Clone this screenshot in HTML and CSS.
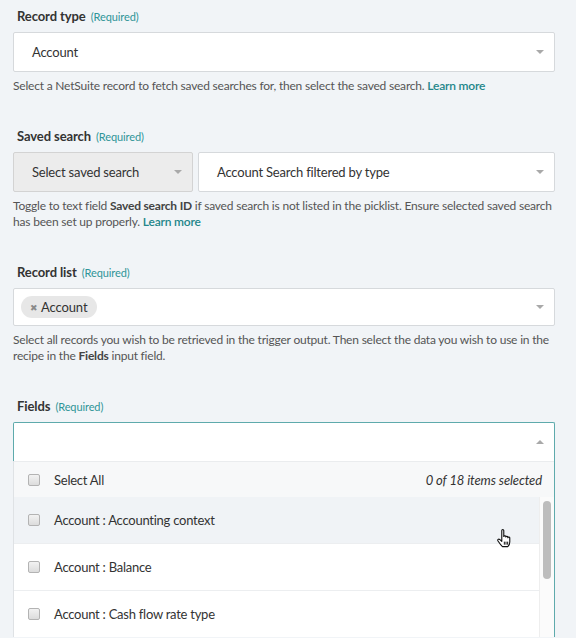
FILE: index.html
```html
<!DOCTYPE html>
<html>
<head>
<meta charset="utf-8">
<link rel="stylesheet" href="styles.css">
</head>
<body>
<div class="page">
  <section class="field">
    <div class="label">Record type <span class="req">(Required)</span></div>
    <div class="select h40"><span class="value">Account</span><span class="caret"></span></div>
    <p class="help">Select a NetSuite record to fetch saved searches for, then select the saved search. <a class="link">Learn more</a></p>
  </section>

  <section class="field">
    <div class="label">Saved search <span class="req">(Required)</span></div>
    <div class="split">
      <div class="select h40 toggle"><span class="value">Select saved search</span><span class="caret"></span></div>
      <div class="select h40 grow"><span class="value">Account Search filtered by type</span><span class="caret"></span></div>
    </div>
    <p class="help">Toggle to text field <b>Saved search ID</b> if saved search is not listed in the picklist. Ensure selected saved search has been set up properly. <a class="link">Learn more</a></p>
  </section>

  <section class="field">
    <div class="label">Record list <span class="req">(Required)</span></div>
    <div class="select h38 multi"><span class="tag"><span class="x">&#x2716;</span>Account</span><span class="caret"></span></div>
    <p class="help">Select all records you wish to be retrieved in the trigger output. Then select the data you wish to use in the recipe in the <b>Fields</b> input field.</p>
  </section>

  <section class="field last">
    <div class="label">Fields <span class="req">(Required)</span></div>
    <div class="select h39 open"><span class="value"></span><span class="caret up"></span></div>
    <div class="dropdown">
      <div class="row head"><span class="cb"></span><span class="txt">Select All</span><span class="count">0 of 18 items selected</span></div>
      <div class="listwrap">
        <div class="list">
          <div class="row item hover"><span class="cb"></span><span class="txt">Account : Accounting context</span></div>
          <div class="row item"><span class="cb"></span><span class="txt">Account : Balance</span></div>
          <div class="row item"><span class="cb"></span><span class="txt">Account : Cash flow rate type</span></div>
        </div>
        <div class="scroll"><div class="thumb"></div></div>
        <svg class="cursor" width="18" height="20" viewBox="0 0 16 18">
          <path d="M6 2.2C6 1 7.8 1 7.8 2.2V7.6C7.8 6.7 9.6 6.7 9.6 7.6V8.1C9.6 7.2 11.4 7.2 11.4 8.1V8.7C11.4 7.9 13.2 7.9 13.2 8.7V12.6C13.2 14.4 12.3 16 11.4 16.8H6.6C5.6 15.8 3.6 13.2 2.6 11.7C1.9 10.5 3.1 9.5 4.1 10.3L6 12Z" fill="#fff" stroke="#111" stroke-width="1" stroke-linejoin="round"/>
          <path d="M8.3 12.3V15M9.8 12.3V15M11.3 12.3V15" stroke="#111" stroke-width="0.9"/>
        </svg>
      </div>
    </div>
  </section>
</div>
</body>
</html>
```
FILE: styles.css
```css
html, body {
  margin: 0;
  padding: 0;
  background: #f1f4f7;
  height: 638px;
  overflow: hidden;
}
body {
  font-family: Lato, "Open Sans", "Liberation Sans", sans-serif;
  color: #333;
}
.page {
  width: 542px;
  margin-left: 13px;
  padding-top: 7px;
}
.field {
  margin-bottom: 33px;
}
.label {
  font-size: 13px;
  font-weight: 700;
  line-height: 18px;
  height: 18px;
  color: #333;
  padding-left: 4px;
  margin-bottom: 7px;
  letter-spacing: -0.1px;
}
.req {
  font-size: 11px;
  font-weight: 400;
  color: #2f9598;
  margin-left: 2px;
  letter-spacing: -0.1px;
}
.select {
  box-sizing: border-box;
  display: flex;
  align-items: center;
  justify-content: space-between;
  background: #fff;
  border: 1px solid #d6d9dc;
  border-radius: 2px;
  padding: 0 10px 0 18px;
  font-size: 13px;
  letter-spacing: -0.2px;
  color: #333;
}
.h40 { height: 40px; }
.h38 { height: 38px; }
.h39 { height: 39px; }
.caret {
  width: 0;
  height: 0;
  border-left: 4px solid transparent;
  border-right: 4px solid transparent;
  border-top: 4px solid #a9a9a9;
}
.caret.up {
  border-top: 0;
  border-bottom: 4px solid #a9a9a9;
}
.split {
  display: flex;
  gap: 5px;
}
.toggle {
  width: 180px;
  background: #ececec;
  border-color: #d3d3d3;
  padding-right: 10px;
}
.grow {
  flex: 1;
}
.multi {
  padding-left: 7px;
}
.tag {
  display: inline-flex;
  align-items: center;
  height: 22px;
  padding: 0 10px 0 9px;
  border-radius: 11px;
  background: #e7e7e7;
  font-size: 13px;
  letter-spacing: -0.1px;
  color: #333;
}
.tag .x {
  font-size: 9px;
  color: #8a8a8a;
  margin-right: 3px;
}
.help {
  margin: 6px 0 0 0;
  font-size: 12px;
  line-height: 16px;
  letter-spacing: -0.2px;
  color: #555;
}
.help b {
  font-weight: 700;
  color: #444;
}
.link {
  color: #23868a;
  font-weight: 600;
}
.open {
  border: 1px solid #5eaaac;
  border-bottom: 0;
  border-radius: 2px 2px 0 0;
}
.dropdown {
  box-sizing: border-box;
  background: #fff;
  border-left: 1px solid #dfe2e5;
  border-right: 1px solid #5eaaac;
}
.row {
  display: flex;
  align-items: center;
  padding-left: 14px;
  font-size: 13px;
  letter-spacing: -0.25px;
  color: #333;
}
.head {
  height: 36px;
  background: #f7f8f9;
  border-top: 1px solid #eaecee;
  box-sizing: border-box;
  padding-right: 12px;
}
.cb {
  box-sizing: border-box;
  width: 12px;
  height: 12px;
  border: 1px solid #b3b3b3;
  border-radius: 2px;
  background: linear-gradient(#f2f2f2, #dcdcdc);
  margin-right: 14px;
  flex: none;
}
.txt {
  flex: 1;
}
.count {
  font-style: italic;
  font-size: 13px;
  letter-spacing: -0.1px;
  color: #333;
}
.listwrap {
  position: relative;
  display: flex;
}
.list {
  flex: 1;
}
.item {
  height: 47px;
  border-top: 1px solid #eceef0;
  box-sizing: border-box;
}
.item:first-child {
  border-top: 0;
  height: 46px;
}
.hover {
  background: #f0f3f6;
}
.scroll {
  width: 14px;
  background: #fbfbfb;
  border-left: 1px solid #eeeeee;
  padding-top: 4px;
}
.thumb {
  width: 8px;
  height: 78px;
  margin-left: 3px;
  border-radius: 4px;
  background: #bdbdbd;
}
.cursor {
  position: absolute;
  left: 481px;
  top: 31px;
}
```
